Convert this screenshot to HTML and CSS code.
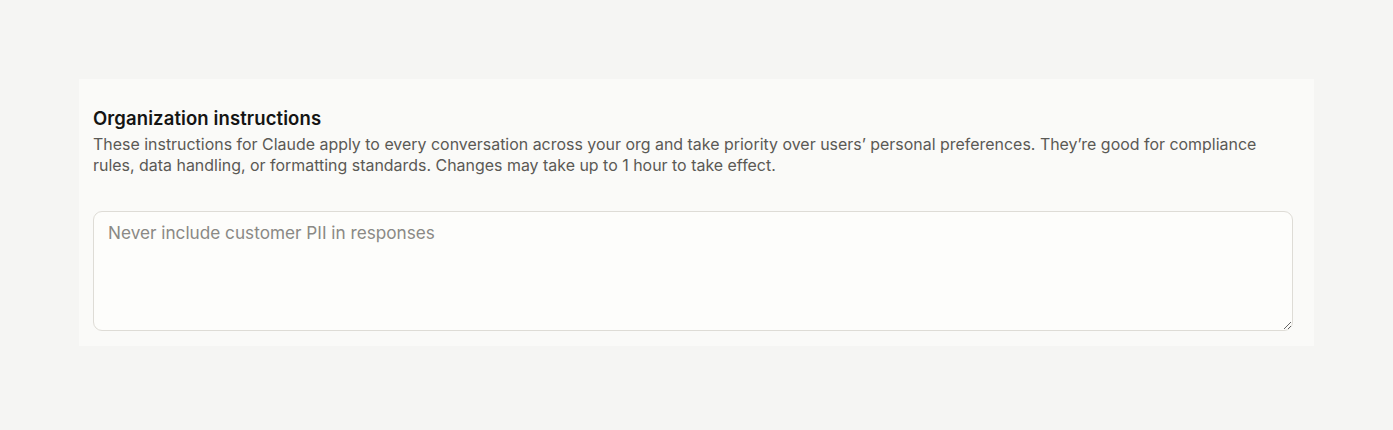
FILE: index.html
```html
<!DOCTYPE html>
<html lang="en">
<head>
<meta charset="utf-8">
<link rel="stylesheet" href="styles.css">
</head>
<body>
<main class="page">
  <section class="card">
    <h2 class="title">Organization instructions</h2>
    <p class="desc">These instructions for Claude apply to every conversation across your org and take priority over users’ personal preferences. They’re good for compliance rules, data handling, or formatting standards. Changes may take up to 1 hour to take effect.</p>
    <textarea class="input" placeholder="Never include customer PII in responses"></textarea>
  </section>
</main>
</body>
</html>
```

FILE: styles.css
```css
* { box-sizing: border-box; }
html, body { margin: 0; padding: 0; }
body {
  background: #f5f5f3;
  font-family: Inter, "Noto Sans", sans-serif;
  color: #1f1e1d;
  height: 430px;
}
.page {
  padding: 79px 79px 0 79px;
}
.card {
  background: #fafaf8;
  padding: 26px 21px 15px 14px;
  display: flex;
  flex-direction: column;
}
.title {
  margin: 0;
  font-size: 18.5px;
  font-weight: 600;
  line-height: 26px;
  color: #141413;
  letter-spacing: 0.1px;
}
.desc {
  margin: 3px 0 0;
  font-size: 15.95px;
  line-height: 21px;
  color: #5a5955;
  letter-spacing: 0;
}
.input {
  margin-top: 35px;
  height: 120px;
  width: 100%;
  resize: vertical;
  background: #fdfdfb;
  border: 1px solid #dedcd6;
  border-radius: 9px;
  padding: 9px 14px;
  font-family: inherit;
  font-size: 17.2px;
  line-height: 24px;
  color: #1f1e1d;
  outline: none;
}
.input::placeholder { color: #8a8985; }
```
